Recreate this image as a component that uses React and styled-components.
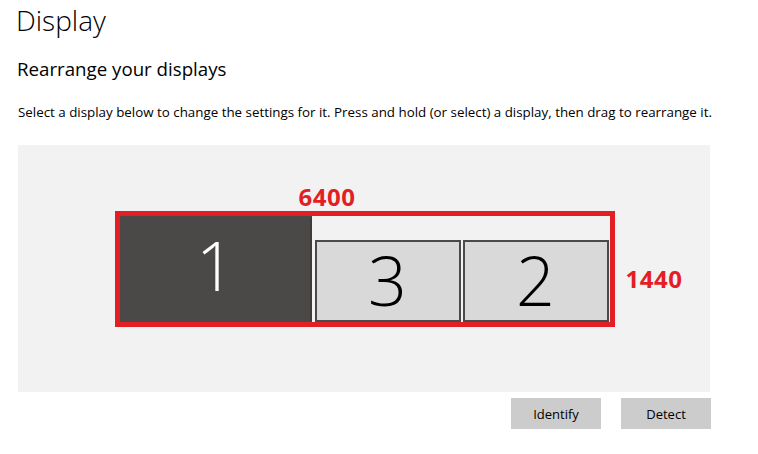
import React from 'react';
import styled, {createGlobalStyle} from 'styled-components';

const GlobalStyle = createGlobalStyle`
  html, body{
    margin: 0;
    padding: 0;
    background: #fff;
  }
  body{
    font-family: "Open Sans", "Noto Sans", "Liberation Sans", sans-serif;
    color: #000;
  }
`;

const Page = styled.div`
  width: 758px;
  height: 454px;
  overflow: hidden;
  padding: 0 0 0 18px;
  box-sizing: border-box;
`;

const Title = styled.h1`
  margin: 3px 0 0 -2px;
  font-size: 28px;
  line-height: 34px;
  font-weight: 300;
`;

const Subtitle = styled.h2`
  margin: 20px 0 0 -1px;
  font-size: 18.7px;
  line-height: 24px;
  font-weight: 400;
`;

const Hint = styled.p`
  margin: 22px 0 0;
  font-size: 13.35px;
  line-height: 18px;
  white-space: nowrap;
`;

const Canvas = styled.div`
  margin-top: 24px;
  width: 692px;
  height: 247px;
  background: #f2f2f2;
  display: flex;
  align-items: center;
  justify-content: center;
`;

const Layout = styled.div`
  position: relative;
  display: flex;
  align-items: flex-end;
  width: 490px;
  height: 106px;
  border: 5px solid #e31e25;
  margin-left: 1px;
`;

const Note = styled.span`
  position: absolute;
  color: #e31e25;
  font-weight: 700;
  font-size: 24px;
  line-height: 24px;
  letter-spacing: 0.5px;
`;

const Monitor = styled.div`
  box-sizing: border-box;
  flex: none;
  width: ${p => p.$w}px;
  height: ${p => p.$h}px;
  margin-left: ${p => p.$gap || 0}px;
  background: ${p => p.$active ? '#4b4947' : '#d9d9d9'};
  border: 2px solid ${p => p.$active ? '#3e3c3a' : '#4a4a4a'};
  border-left-color: ${p => p.$active ? '#4b4947' : '#4a4a4a'};
  border-top-color: ${p => p.$active ? '#4b4947' : '#4a4a4a'};
  border-bottom-color: ${p => p.$active ? '#4b4947' : '#4a4a4a'};
  color: ${p => p.$active ? '#fff' : '#000'};
  display: flex;
  align-items: center;
  justify-content: center;
  font-size: 68px;
  font-weight: 300;
  line-height: 1;
  padding-bottom: ${p => p.$active ? 8 : 2}px;
`;

const Actions = styled.div`
  display: flex;
  justify-content: flex-end;
  gap: 20px;
  width: 693px;
  margin-top: 6px;
`;

const Button = styled.button`
  width: 90px;
  height: 31px;
  border: none;
  background: #cccccc;
  font-family: inherit;
  font-size: 13px;
  color: #000;
  padding: 0;
`;

const App = () => {
  return(
    <>
      <GlobalStyle />
      <Page>
        <Title>Display</Title>
        <Subtitle>Rearrange your displays</Subtitle>
        <Hint>Select a display below to change the settings for it. Press and hold (or select) a display, then drag to rearrange it.</Hint>

        <Canvas>
          <Layout>
            <Note style={{left: 179, top: -31}}>6400</Note>
            <Note style={{left: 506, top: 51}}>1440</Note>
            <Monitor $active $w={192} $h={106}>1</Monitor>
            <Monitor $w={146} $h={82} $gap={3}>3</Monitor>
            <Monitor $w={146} $h={82} $gap={2}>2</Monitor>
          </Layout>
        </Canvas>

        <Actions>
          <Button>Identify</Button>
          <Button>Detect</Button>
        </Actions>
      </Page>
    </>
  )
}

export default App;
